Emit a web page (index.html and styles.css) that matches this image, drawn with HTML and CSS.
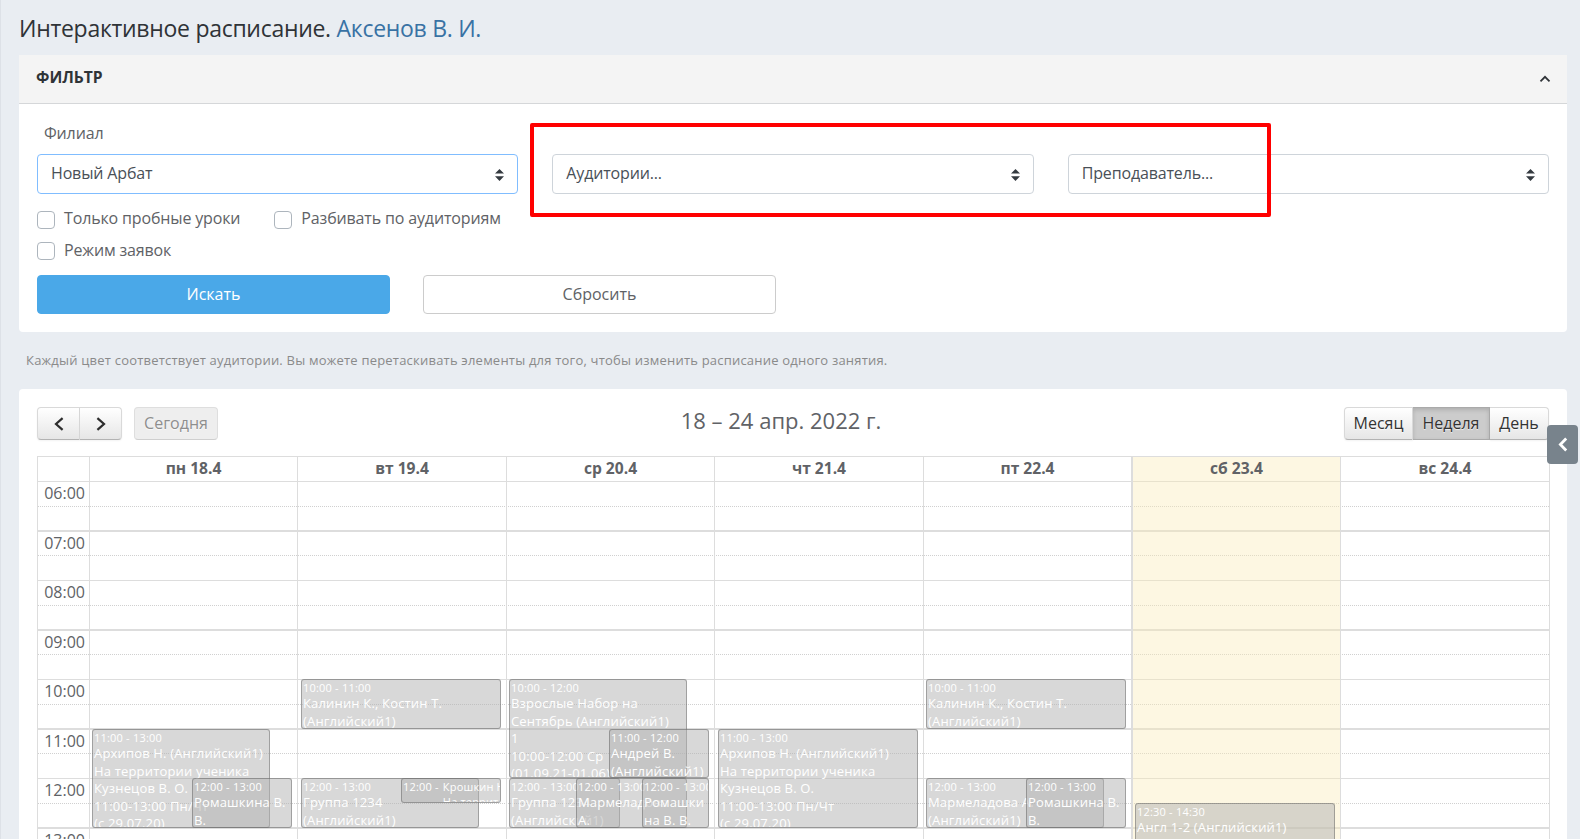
FILE: index.html
```html
<!DOCTYPE html>
<html lang="ru">
<head>
<meta charset="utf-8">
<title>Интерактивное расписание</title>
<link rel="stylesheet" href="styles.css">
</head>
<body>
<main class="page">
  <h1 class="title">Интерактивное расписание. <a class="title-link">Аксенов В. И.</a></h1>

  <section class="filter">
    <header class="filter-head">
      <span class="filter-name">ФИЛЬТР</span>
      <svg class="chevron" width="12" height="8" viewBox="0 0 12 8"><path d="M1.5 6.3 6 1.8l4.5 4.5" fill="none" stroke="#2f3337" stroke-width="1.8"/></svg>
    </header>
    <div class="filter-body">
      <div class="label">Филиал</div>
      <div class="selects">
        <div class="select focused"><span>Новый Арбат</span><svg class="sort" width="9" height="12" viewBox="0 0 9 12"><path d="M4.5 0 9 4.6H0zM0 7.2h9L4.5 12z" fill="#343a40"/></svg></div>
        <div class="select"><span>Аудитории...</span><svg class="sort" width="9" height="12" viewBox="0 0 9 12"><path d="M4.5 0 9 4.6H0zM0 7.2h9L4.5 12z" fill="#343a40"/></svg></div>
        <div class="select"><span>Преподаватель...</span><svg class="sort" width="9" height="12" viewBox="0 0 9 12"><path d="M4.5 0 9 4.6H0zM0 7.2h9L4.5 12z" fill="#343a40"/></svg></div>
      </div>
      <div class="checks">
        <div class="check"><i class="box"></i><span>Только пробные уроки</span></div>
        <div class="check"><i class="box"></i><span>Разбивать по аудиториям</span></div>
      </div>
      <div class="checks second">
        <div class="check"><i class="box"></i><span>Режим заявок</span></div>
      </div>
      <div class="buttons">
        <div class="btn primary">Искать</div>
        <div class="btn">Сбросить</div>
      </div>
    </div>
    <div class="highlight"></div>
  </section>

  <p class="note">Каждый цвет соответствует аудитории. Вы можете перетаскивать элементы для того, чтобы изменить расписание одного занятия.</p>

  <section class="card">
    <div class="toolbar">
      <div class="left">
        <div class="group">
          <div class="tb nav"><svg width="12" height="14" viewBox="0 0 12 14"><path d="M9.6 1.2 3 7l6.6 5.8" fill="none" stroke="#2d2d2d" stroke-width="2.2"/></svg></div>
          <div class="tb nav"><svg width="12" height="14" viewBox="0 0 12 14"><path d="M2.4 1.2 9 7l-6.6 5.8" fill="none" stroke="#2d2d2d" stroke-width="2.2"/></svg></div>
        </div>
        <div class="group"><div class="tb today">Сегодня</div></div>
      </div>
      <div class="range">18 – 24 апр. 2022 г.</div>
      <div class="group views">
        <div class="tb month">Месяц</div><div class="tb week">Неделя</div><div class="tb day">День</div>
      </div>
      <div class="drawer"><svg width="10" height="15" viewBox="0 0 10 15"><path d="M8.2 1.5 2.4 7.5l5.8 6" fill="none" stroke="#fff" stroke-width="2.8"/></svg></div>
    </div>

    <div class="calendar">
      <div class="row head">
        <div></div><div>пн 18.4</div><div>вт 19.4</div><div>ср 20.4</div><div>чт 21.4</div><div>пт 22.4</div><div class="sat">сб 23.4</div><div>вс 24.4</div>
      </div>
      <div class="row body">
        <div class="hours">
          <div class="hour">06:00</div><div class="hour odd">07:00</div><div class="hour">08:00</div><div class="hour odd">09:00</div><div class="hour">10:00</div><div class="hour odd">11:00</div><div class="hour">12:00</div><div class="hour odd">13:00</div>
        </div>
        <div class="col">
          <div class="ev h11 two l0"><time>11:00 - 13:00</time><p>Архипов Н. (Английский1)<br>На территории ученика<br>Кузнецов В. О.<br>11:00-13:00 Пн/Чт<br>(с 29.07.20)</p></div>
          <div class="ev h12 one half"><time>12:00 - 13:00</time><p>Ромашкина В.<br>В.</p></div>
        </div>
        <div class="col tue">
          <div class="ev h10 one full"><time>10:00 - 11:00</time><p>Калинин К., Костин Т.<br>(Английский1)</p></div>
          <div class="ev h12 one l0"><time>12:00 - 13:00</time><p>Группа 1234<br>(Английский1)</p></div>
          <div class="ev h12 short half"><time>12:00 -</time><p>Крошкин Н.<br>На территории</p></div>
        </div>
        <div class="col">
          <div class="ev h10 two l0"><time>10:00 - 12:00</time><p>Взрослые Набор на<br>Сентябрь (Английский1)<br>1<br>10:00-12:00 Ср<br>(01.09.21-01.06)</p></div>
          <div class="ev h11 one half low"><time>11:00 - 12:00</time><p>Андрей В.<br>(Английский1)</p></div>
          <div class="ev h12 one third1"><time>12:00 - 13:00</time><p>Группа 1234<br>(Английский1)</p></div>
          <div class="ev h12 one third2"><time>12:00 - 13:00</time><p>Мармеладова<br>А.</p></div>
          <div class="ev h12 one third3"><time>12:00 - 13:00</time><p>Ромашки<br>на В. В.</p></div>
        </div>
        <div class="col thu">
          <div class="ev h11 two full"><time>11:00 - 13:00</time><p>Архипов Н. (Английский1)<br>На территории ученика<br>Кузнецов В. О.<br>11:00-13:00 Пн/Чт<br>(с 29.07.20)</p></div>
        </div>
        <div class="col">
          <div class="ev h10 one full"><time>10:00 - 11:00</time><p>Калинин К., Костин Т.<br>(Английский1)</p></div>
          <div class="ev h12 one l0"><time>12:00 - 13:00</time><p>Мармеладова А.<br>(Английский1)</p></div>
          <div class="ev h12 one half"><time>12:00 - 13:00</time><p>Ромашкина В.<br>В.</p></div>
        </div>
        <div class="col sat">
          <div class="ev h1230 two full"><time>12:30 - 14:30</time><p>Англ 1-2 (Английский1)</p></div>
        </div>
        <div class="col"></div>
      </div>
    </div>
  </section>
</main>
</body>
</html>
```
FILE: styles.css
```css
* { box-sizing: border-box; }
html, body { margin: 0; height: 839px; overflow: hidden; }
body { background: #e9edf2; color: #606266; font: 16px/24px "Open Sans", sans-serif; }
p { margin: 0; }
.page { height: 839px; padding: 0 13px 0 18px; border-left: 1px solid #dde1e7; overflow: hidden; }

.title { margin: 0; height: 55px; padding-top: 10px; font-size: 23px; line-height: 36px; font-weight: 400; letter-spacing: -.29px; color: #2f3337; white-space: nowrap; }
.title-link { color: #3972a4; }

.filter { position: relative; height: 277px; background: #fff; border-radius: 0 0 4px 4px; }
.filter-head { display: flex; justify-content: space-between; height: 49px; padding: 0 16px 0 17px; background: #f4f4f4; border-bottom: 1px solid #d5d7d9; line-height: 44px; }
.filter-name { font-weight: 700; font-size: 15.6px; color: #2f3337; }
.chevron { margin-top: 20px; }
.filter-body { padding: 17px 18px 0; letter-spacing: -.15px; }
.label { height: 33px; padding-left: 7px; }
.selects { display: grid; grid-template-columns: repeat(3, 1fr); gap: 34px; height: 40px; }
.select { display: flex; justify-content: space-between; align-items: center; padding: 0 13px 2px; border: 1px solid #ced4da; border-radius: 4px; color: #495057; }
.focused { border-color: #80bdff; }
.sort { margin-top: 3px; }
.checks { display: flex; gap: 34px; height: 31px; padding-top: 17px; }
.second { height: 50px; }
.check { display: flex; gap: 9px; height: 18px; line-height: 15px; }
.second .check { line-height: 17px; }
.box { width: 18px; height: 18px; border: 1px solid #adb5bd; border-radius: 4px; }
.buttons { display: flex; gap: 33px; letter-spacing: 0; }
.btn { width: 353px; height: 39px; border: 1px solid #ccc; border-radius: 4px; text-align: center; line-height: 36px; }
.primary { background: #4aa8e8; border-color: #4aa8e8; color: #fff; }
.highlight { position: absolute; left: 511px; top: 68px; width: 741px; height: 94px; border: 4px solid #f00; border-radius: 2px; }

.note { height: 57px; padding: 17px 0 0 7px; font-size: 13px; line-height: 22px; letter-spacing: .208px; color: #8a8a8a; white-space: nowrap; }

.card { height: 460px; padding: 18px 17px 0 18px; background: #fff; border-radius: 4px; }
.toolbar { position: relative; display: flex; justify-content: space-between; height: 49px; }
.left { display: flex; gap: 12px; }
.group { display: flex; height: 33px; }
.tb { height: 33px; border: 1px solid #d9d9d9; border-bottom-color: #b3b3b3; border-left-width: 0; background: linear-gradient(#fff, #e6e6e6); color: #333; text-align: center; line-height: 30px; text-shadow: 0 1px 1px rgba(255,255,255,.75); box-shadow: 0 1px 2px rgba(0,0,0,.05); }
.tb:first-child { border-left-width: 1px; border-radius: 4px 0 0 4px; }
.tb:last-child { border-radius: 0 4px 4px 0; }
.nav { display: flex; align-items: center; justify-content: center; width: 42px; }
.nav:first-child { width: 43px; }
.group .today { width: 84px; border-radius: 4px; background: #eee; color: #8e8e8e; border-color: #dedede; border-bottom-color: #cfcfcf; box-shadow: none; }
.range { position: absolute; left: 0; right: 0; top: -1px; text-align: center; font-size: 22px; line-height: 28px; padding-right: 25px; }
.views { margin-right: 1px; }
.month { width: 69px; }
.week { width: 77px; background: #ccc; border-color: #aaa; box-shadow: inset 0 2px 4px rgba(0,0,0,.15); }
.day { width: 59px; }
.drawer { position: absolute; right: -28px; top: 18px; width: 31px; height: 39px; padding: 12px 0 0 11px; background: #78838c; border-radius: 4px; z-index: 2; line-height: 0; }

.calendar { border: 1px solid #ddd; border-bottom: 0; width: 1513px; }
.row { display: grid; grid-template-columns: 51px 208px 209px 208px 209px 208px 209px 209px; }
.head > div { height: 24px; border-left: 1px solid #ddd; text-align: center; font-weight: 700; font-size: 15.6px; line-height: 23px; }
.head > div:first-child { border-left: 0; }
.body { position: relative; height: 380px; background: repeating-linear-gradient(#ddd 0 1px, transparent 1px 49px, #ddd 49px 51px, transparent 51px 99px); }
/* dotted half-hour lines */
.body::before { content: ""; position: absolute; inset: 0; background: repeating-linear-gradient(transparent 0 25px, #d0d0d0 25px 26px, transparent 26px 74px, #d0d0d0 74px 75px, transparent 75px 99px); -webkit-mask: repeating-linear-gradient(90deg, #000 0 1px, transparent 1px 2px); mask: repeating-linear-gradient(90deg, #000 0 1px, transparent 1px 2px); }
.hour { height: 49px; padding: 1px 4px 0 0; text-align: right; line-height: 23px; }
.odd { height: 50px; padding-top: 2px; }
.col { position: relative; border-left: 1px solid #ddd; }
.row .sat { border-left-width: 2px; background: rgba(250,235,183,.4); background-clip: padding-box; }

.ev { position: absolute; left: 2px; overflow: hidden; padding: 0 1px; border: 1px solid rgba(68,68,68,.38); border-radius: 3px; background: rgba(177,177,177,.5); color: #fff; font-size: 13px; line-height: 17.6px; letter-spacing: .17px; white-space: nowrap; }
.ev time { display: block; height: 15px; font-size: 11px; line-height: 15px; letter-spacing: .2px; }
.h10 { top: 198px; } .h11 { top: 248px; } .h12 { top: 297px; } .h1230 { top: 322px; }
.one { height: 50px; } .two { height: 99px; } .short { height: 25px; }
.low { height: 49px; }
.l0 { width: 178px; } .full { width: 200px; } .half { left: 102px; width: 100px; }
.third1 { width: 111px; } .third2 { left: 69px; width: 111px; } .third3 { left: 135px; width: 67px; }
.tue .ev, .thu .ev { left: 3px; }
.tue .half { left: 103px; }
.short { display: flex; gap: 4px; font-size: 11px; line-height: 15px; }
```
